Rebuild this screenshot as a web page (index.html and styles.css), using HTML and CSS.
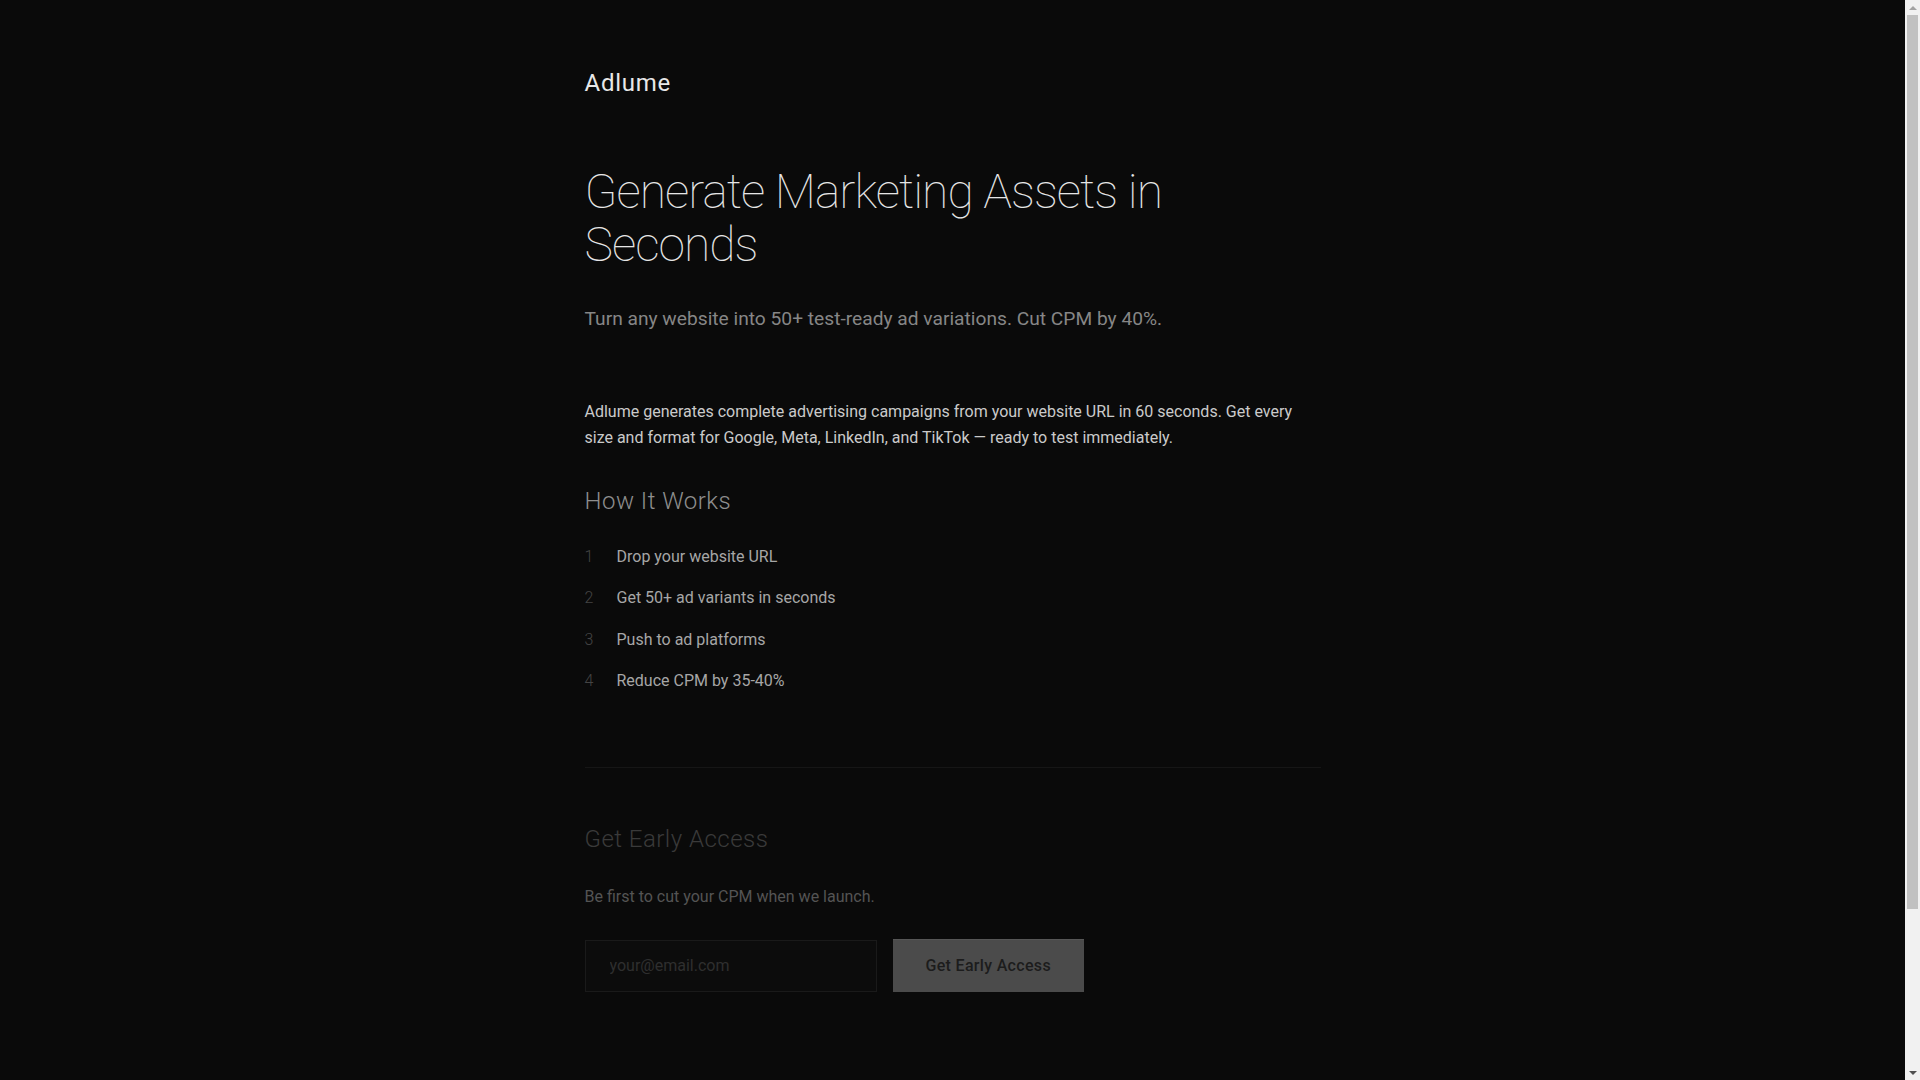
FILE: index.html
```html
<!DOCTYPE html>
<html lang="en">
<head>
<meta charset="utf-8">
<title>Adlume</title>
<link rel="stylesheet" href="styles.css">
</head>
<body>
<div class="container">
  <header class="header">
    <div class="logo">Adlume</div>
  </header>
  <main>
    <section class="hero">
      <h1 class="title">Generate Marketing Assets in Seconds</h1>
      <p class="tagline">Turn any website into 50+ test-ready ad variations. Cut CPM by 40%.</p>
      <p class="intro">Adlume generates complete advertising campaigns from your website URL in 60 seconds. Get every size and format for Google, Meta, LinkedIn, and TikTok — ready to test immediately.</p>
      <h2 class="section-title">How It Works</h2>
      <ol class="steps">
        <li class="step"><span class="step-num">1</span><span class="step-text">Drop your website URL</span></li>
        <li class="step"><span class="step-num">2</span><span class="step-text">Get 50+ ad variants in seconds</span></li>
        <li class="step"><span class="step-num">3</span><span class="step-text">Push to ad platforms</span></li>
        <li class="step"><span class="step-num">4</span><span class="step-text">Reduce CPM by 35-40%</span></li>
      </ol>
    </section>
    <section class="signup">
      <h2 class="signup-title">Get Early Access</h2>
      <p class="signup-text">Be first to cut your CPM when we launch.</p>
      <form class="signup-form" onsubmit="return false;">
        <input class="email" type="email" placeholder="your@email.com">
        <button class="submit" type="submit">Get Early Access</button>
      </form>
    </section>
  </main>
</div>
<div class="scrollbar" aria-hidden="true">
  <span class="sb-btn"><span class="sb-arrow-up"></span></span>
  <span class="sb-track"><span class="sb-thumb"></span></span>
  <span class="sb-btn"><span class="sb-arrow-down"></span></span>
</div>
</body>
</html>
```

FILE: styles.css
```css
html, body {
  margin: 0;
  padding: 0;
  background: #0a0a0a;
}

body {
  padding-right: 15px;
  font-family: Roboto, "Liberation Sans", sans-serif;
  color: #cccccc;
}

.container {
  max-width: 800px;
  margin: 0 auto;
  padding: 0 32px 276px;
  box-sizing: border-box;
}

.header {
  padding-top: 65px;
}

.logo {
  font-size: 24px;
  line-height: 36px;
  font-weight: 400;
  letter-spacing: 0.03em;
  color: #e8e8e8;
}

.title {
  margin: 65px 0 0;
  font-size: 48px;
  line-height: 1.1;
  font-weight: 100;
  letter-spacing: -0.02em;
  color: #e6e6e6;
}

.tagline {
  margin: 32px 0 0;
  font-size: 19.2px;
  line-height: 1.6;
  font-weight: 400;
  color: #868686;
}

.intro {
  margin: 65px 0 0;
  font-size: 16px;
  line-height: 1.6;
  color: #cacaca;
}

.section-title {
  margin: 35px 0 0;
  font-size: 24px;
  line-height: 1.3;
  font-weight: 300;
  letter-spacing: 0.02em;
  color: #8e8e8e;
}

.steps {
  list-style: none;
  margin: 19px 0 0;
  padding: 0;
}

.step {
  display: flex;
  padding: 8px 0;
  font-size: 16px;
  line-height: 1.6;
}

.step-num {
  flex: 0 0 32px;
  color: #444444;
  font-weight: 300;
}

.step-text {
  color: #a6a6a6;
}

.signup {
  margin-top: 65px;
  border-top: 1px solid #161616;
  padding-top: 56px;
}

.signup-title {
  margin: 0;
  font-size: 24px;
  line-height: 1.3;
  font-weight: 300;
  letter-spacing: 0.02em;
  color: #3a3a3a;
}

.signup-text {
  margin: 29px 0 0;
  font-size: 16px;
  line-height: 1.6;
  color: #545454;
}

.signup-form {
  display: flex;
  gap: 16px;
  margin-top: 29px;
}

.email {
  flex: 0 0 292px;
  box-sizing: border-box;
  height: 52px;
  padding: 0 24px;
  margin-top: 1px;
  background: #0c0c0c;
  border: 1px solid #1a1a1a;
  border-radius: 0;
  font-family: Roboto, "Liberation Sans", sans-serif;
  font-size: 16px;
  color: #cccccc;
  outline: none;
}

.email::placeholder {
  color: #2f2f2f;
}

.submit {
  box-sizing: border-box;
  height: 53px;
  padding: 0 33px;
  background: #4b4b4b;
  border: none;
  border-top: 1px solid #565656;
  border-radius: 0;
  font-family: Roboto, "Liberation Sans", sans-serif;
  font-size: 16px;
  font-weight: 500;
  letter-spacing: 0.02em;
  color: #1c1c1c;
  cursor: pointer;
}

/* browser-style vertical scrollbar */
.scrollbar {
  position: fixed;
  top: 0;
  right: 0;
  width: 15px;
  height: 100vh;
  background: #f1f1f1;
  display: flex;
  flex-direction: column;
}

.sb-btn {
  flex: 0 0 15px;
  display: flex;
  align-items: center;
  justify-content: center;
}

.sb-arrow-up {
  width: 0;
  height: 0;
  border-left: 4px solid transparent;
  border-right: 4px solid transparent;
  border-bottom: 4px solid #a3a3a3;
}

.sb-arrow-down {
  width: 0;
  height: 0;
  border-left: 4px solid transparent;
  border-right: 4px solid transparent;
  border-top: 4px solid #505050;
}

.sb-track {
  flex: 1;
  padding: 0 2px;
}

.sb-thumb {
  display: block;
  height: 894px;
  background: #c1c1c1;
}
```
